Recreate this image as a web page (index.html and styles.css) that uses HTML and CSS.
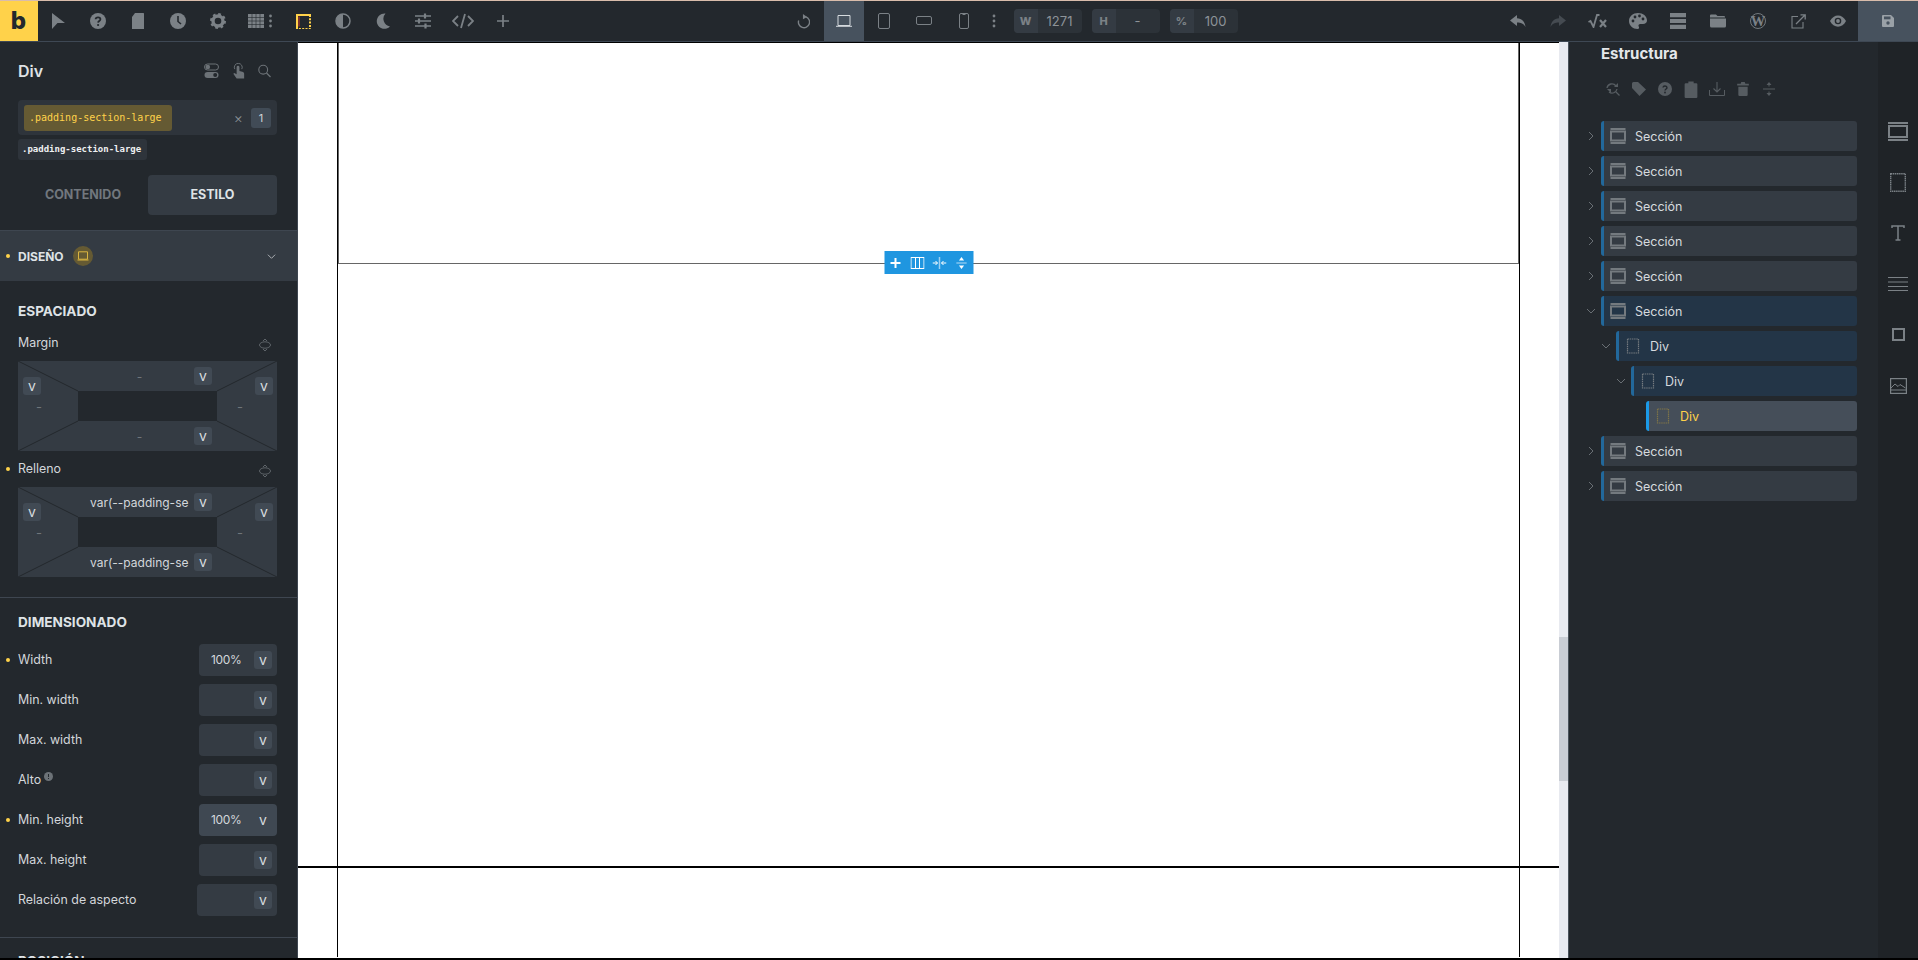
FILE: index.html
```html
<!DOCTYPE html>
<html lang="es">
<head>
<meta charset="utf-8">
<title>Estructura</title>
<link rel="stylesheet" href="styles.css">
</head>
<body>
<svg class="defs" aria-hidden="true">
  <symbol id="i-section" viewBox="0 0 16 16"><path d="M.5 1h15M.5 15h15" stroke="currentColor" stroke-width="1.800" fill="none"/><rect x="1" y="3.500" width="14" height="9" fill="none" stroke="currentColor" stroke-width="2"/></symbol>
  <symbol id="i-div" viewBox="0 0 16 16"><rect x="2.500" y="1" width="11" height="14" fill="none" stroke="currentColor" stroke-width="1.200" stroke-dasharray="1.500 .7"/></symbol>
  <symbol id="i-chev-r" viewBox="0 0 10 10"><path d="M3 1l4 4-4 4" fill="none" stroke="currentColor"/></symbol>
  <symbol id="i-chev-d" viewBox="0 0 10 10"><path d="M1 3l4 4 4-4" fill="none" stroke="currentColor"/></symbol>
  <symbol id="i-link" viewBox="0 0 14 14"><ellipse cx="7" cy="7" rx="5.500" ry="3.200" fill="none" stroke="currentColor"/><path d="M5 3l2-2 2 2M5 11l2 2 2-2" fill="none" stroke="currentColor"/></symbol>
</svg>

<div class="app">
  <div class="top-edge"></div>
  <header class="toolbar">
    <div class="group">
      <div class="logo">b</div>
      <span class="tool"><svg viewBox="0 0 16 16" class="ic16"><path d="M2 0l13 10H7.500L2 16z" fill="currentColor"/></svg></span>
      <span class="tool"><svg viewBox="0 0 16 16" class="ic16"><circle cx="8" cy="8" r="8" fill="currentColor"/><path d="M5.600 6.200C5.800 3.800 10.400 3.800 10.400 6.300 10.400 8 8.200 8 8.100 9.600" fill="none" stroke="#23282d" stroke-width="1.800"/><circle cx="8.100" cy="12" r="1.100" fill="#23282d"/></svg></span>
      <span class="tool"><svg viewBox="0 0 16 16" class="ic16"><path d="M6 0h8.500a.5.5 0 0 1 .5.500V16H3V4z" fill="currentColor" transform="translate(-1)"/></svg></span>
      <span class="tool"><svg viewBox="0 0 16 16" class="ic16"><circle cx="8" cy="8" r="8" fill="currentColor"/><path d="M8 3v5.500l3 2.500" fill="none" stroke="#23282d" stroke-width="1.600"/></svg></span>
      <span class="tool"><svg viewBox="0 0 16 16" class="ic16"><circle cx="8" cy="8" r="5" fill="none" stroke="currentColor" stroke-width="3.400"/><circle cx="8" cy="8" r="7" fill="none" stroke="currentColor" stroke-width="2" stroke-dasharray="2.750 2.750"/></svg></span>
      <span class="tool"><svg viewBox="0 0 24 16" class="ic-grid"><rect x="0" y="1" width="16" height="14" fill="currentColor"/><path d="M0 4.500h16M0 8h16M0 11.500h16M4 1v14M8 1v14M12 1v14" stroke="#23282d" stroke-width=".6"/><circle cx="22.500" cy="3" r="1.400" fill="currentColor"/><circle cx="22.500" cy="8" r="1.400" fill="currentColor"/><circle cx="22.500" cy="13" r="1.400" fill="currentColor"/></svg></span>
      <span class="tool tool-gap"><svg viewBox="0 0 15 15" class="ic-frame"><path d="M3 2.500v10" stroke="#b5392f" stroke-width="1.200"/><path d="M1 15V1h14" fill="none" stroke="#ffd24a" stroke-width="2"/><path d="M14 1v14H1" fill="none" stroke="#ffd24a" stroke-width="2" stroke-dasharray="2 1.300"/></svg></span>
      <span class="tool"><svg viewBox="0 0 16 16" class="ic16"><circle cx="8" cy="8" r="7" fill="none" stroke="currentColor" stroke-width="1.500"/><path d="M8 1a7 7 0 0 0 0 14z" fill="currentColor"/></svg></span>
      <span class="tool"><svg viewBox="0 0 16 16" class="ic16"><path d="M10.500 .5a7.700 7.700 0 1 0 4.500 13A7.800 7.800 0 0 1 10.500 .5z" fill="currentColor"/></svg></span>
      <span class="tool"><svg viewBox="0 0 16 16" class="ic16"><path d="M0 3h16M0 8h16M0 13h16" stroke="currentColor" stroke-width="1.300"/><path d="M10 .5v5M4 5.500v5M10.500 10.500v5" stroke="currentColor" stroke-width="2.200"/></svg></span>
      <span class="tool"><svg viewBox="0 0 22 16" class="ic-code"><path d="M6 3L1 8l5 5M16 3l5 5-5 5M13 1L9 15" fill="none" stroke="currentColor" stroke-width="1.800"/></svg></span>
      <span class="tool"><svg viewBox="0 0 12 12" class="ic12"><path d="M6 0v12M0 6h12" stroke="currentColor" stroke-width="1.700"/></svg></span>
    </div>

    <div class="group">
      <span class="tool"><svg viewBox="0 0 12 14" class="ic-refresh"><path d="M8.300 2.700A5.200 5.200 0 1 1 1.500 6" fill="none" stroke="currentColor" stroke-width="1.300"/><path d="M5.500 0l3.800 2.800L5.500 5z" fill="currentColor"/></svg></span>
      <span class="tool tool-active"><svg viewBox="0 0 16 12" class="ic-dev"><path d="M2 .5h12v10H2zM0 11.300h16" fill="none" stroke="currentColor"/></svg></span>
      <span class="tool"><svg viewBox="0 0 12 16" class="ic-dev-v"><rect x=".5" y=".5" width="11" height="15" rx="1.500" fill="none" stroke="currentColor"/></svg></span>
      <span class="tool"><svg viewBox="0 0 16 10" class="ic-dev-h"><rect x=".5" y=".5" width="15" height="8" rx="1.500" fill="none" stroke="currentColor"/></svg></span>
      <span class="tool"><svg viewBox="0 0 10 16" class="ic-dev-p"><rect x=".5" y=".5" width="9" height="15" rx="1.500" fill="none" stroke="currentColor"/><path d="M3.500 1.500h3" stroke="currentColor"/></svg></span>
      <span class="tool tool-narrow"><svg viewBox="0 0 4 14" class="ic-dots"><circle cx="2" cy="2" r="1.400" fill="currentColor"/><circle cx="2" cy="7" r="1.400" fill="currentColor"/><circle cx="2" cy="12" r="1.400" fill="currentColor"/></svg></span>
      <div class="dims">
        <div class="dim"><b>W</b><span>1271</span></div>
        <div class="dim"><b>H</b><span>-</span></div>
        <div class="dim"><b>%</b><span>100</span></div>
      </div>
    </div>

    <div class="group">
      <span class="tool"><svg viewBox="0 0 16 14" class="ic16"><path d="M7 1L0 6.500 7 12V8.500c4 0 6.500 1 8.500 4.500C15 8 12 4.500 7 4.300z" fill="currentColor"/></svg></span>
      <span class="tool tool-dim"><svg viewBox="0 0 16 14" class="ic16"><path d="M9 1l7 5.500L9 12V8.500c-4 0-6.500 1-8.500 4.500C1 8 4 4.500 9 4.300z" fill="currentColor"/></svg></span>
      <span class="tool"><svg viewBox="0 0 20 14" class="ic-sqrt"><path d="M.5 8l2-1 3 6L9 1h2.500" fill="none" stroke="currentColor" stroke-width="1.800"/><path d="M12 6l6 7M18 6l-6 7" stroke="currentColor" stroke-width="2.200"/></svg></span>
      <span class="tool"><svg viewBox="0 0 18 16" class="ic-pal"><path d="M9 0C4 0 0 3.500 0 8s4 8 8.500 8c1.800 0 1.800-1.500 1.200-2.500-.7-1.200.2-2.500 1.600-2.500H14c2.300 0 4-1.300 4-3.500C18 3 14 0 9 0z" fill="currentColor"/><circle cx="4" cy="8" r="1.400" fill="#23282d"/><circle cx="6" cy="4" r="1.400" fill="#23282d"/><circle cx="10.500" cy="3" r="1.400" fill="#23282d"/><circle cx="14" cy="6" r="1.400" fill="#23282d"/></svg></span>
      <span class="tool"><svg viewBox="0 0 16 16" class="ic16"><path d="M0 0h16v4.200H0zM0 5.900h16v4.200H0zM0 11.800h16V16H0z" fill="currentColor"/></svg></span>
      <span class="tool"><svg viewBox="0 0 16 13" class="ic16"><path d="M1 0h5l1.500 1.500H14A1 1 0 0 1 15 2.500V3H0V1a1 1 0 0 1 1-1zM0 4h16v7.500a1.500 1.500 0 0 1-1.500 1.500h-13A1.500 1.500 0 0 1 0 11.500z" fill="currentColor"/></svg></span>
      <span class="tool"><svg viewBox="0 0 16 16" class="ic-wp"><circle cx="8" cy="8" r="7.500" fill="none" stroke="currentColor" stroke-width=".9"/><text x="8" y="13" class="wp-letter">W</text></svg></span>
      <span class="tool"><svg viewBox="0 0 15 15" class="ic-ext"><path d="M7 2.500H1v11.500h11V8" fill="none" stroke="currentColor" stroke-width="1.100"/><path d="M5 10L14 1M9.500 .8h4.700v4.700" fill="none" stroke="currentColor" stroke-width="1.300"/></svg></span>
      <span class="tool"><svg viewBox="0 0 16 12" class="ic16"><path d="M0 6c3.500-7.500 12.500-7.500 16 0-3.500 7.500-12.500 7.500-16 0z" fill="currentColor"/><circle cx="8" cy="6" r="3.300" fill="#23282d"/><circle cx="8" cy="6" r="1.900" fill="currentColor"/></svg></span>
      <span class="save"><svg viewBox="0 0 12 12" class="ic12"><path d="M1 0h8l3 3v8a1 1 0 0 1-1 1H1a1 1 0 0 1-1-1V1a1 1 0 0 1 1-1z" fill="currentColor"/><rect x="2" y="1.500" width="6.500" height="2.800" fill="#47525e"/><circle cx="6" cy="8" r="1.700" fill="#47525e"/></svg></span>
    </div>
  </header>

  <main class="workspace">
    <aside class="inspector">
      <div class="insp-head">
        <span class="insp-title">Div</span>
        <div class="insp-actions">
          <svg viewBox="0 0 15 16" class="act"><rect x=".5" y="1" width="14" height="6" rx="3" fill="none" stroke="currentColor"/><circle cx="3.800" cy="4" r="2.300" fill="currentColor"/><rect x=".5" y="9" width="14" height="6" rx="3" fill="currentColor"/><circle cx="11.200" cy="12" r="2" fill="#23282d"/></svg>
          <svg viewBox="0 0 13 17" class="act act-s"><path d="M2.500 6.500a4.200 4.200 0 1 1 7.500 0" fill="none" stroke="currentColor"/><path d="M4.500 4.500a1.500 1.500 0 0 1 3 0v4l3 .8c1.200.3 2 1 2 2.200V16.500H4.500L1 11.500l1-1 2.500 1.500z" fill="currentColor"/></svg>
          <svg viewBox="0 0 13 13" class="act act-s"><circle cx="5.200" cy="5.200" r="4.400" fill="none" stroke="currentColor" stroke-width="1.100"/><path d="M8.500 8.500l4 4" stroke="currentColor" stroke-width="1.300"/></svg>
        </div>
      </div>

      <div class="class-box">
        <span class="class-chip">.padding-section-large</span>
        <span class="class-x">×</span>
        <span class="class-count">1</span>
      </div>
      <div class="class-tag">.padding-section-large</div>

      <div class="tabs">
        <div class="tab">CONTENIDO</div>
        <div class="tab tab-on">ESTILO</div>
      </div>

      <div class="panel-bar">
        <span class="dot"></span>
        <span class="bar-label">DISEÑO</span>
        <span class="bar-badge"><svg viewBox="0 0 12 10"><path d="M1.500 .8h9v7.400h-9zM.5 9h11" fill="none" stroke="currentColor"/></svg></span>
        <svg viewBox="0 0 10 10" class="bar-chev"><use href="#i-chev-d"/></svg>
      </div>

      <h3 class="group-title first">ESPACIADO</h3>
      <div class="label-row lr-first"><span>Margin</span><svg class="link"><use href="#i-link"/></svg></div>
      <div class="box">
        <svg class="box-lines" viewBox="0 0 259 90"><path d="M0 0l60 30M259 0l-60 30M0 90l60-30M259 90l-60-30" stroke="#23282d"/></svg>
        <div class="side side-l"><span class="unit">v</span><span class="dash">-</span></div>
        <div class="edge edge-t"><span class="val val-c">-</span><span class="unit">v</span></div>
        <div class="hole"></div>
        <div class="edge edge-b"><span class="val val-c">-</span><span class="unit">v</span></div>
        <div class="side side-r"><span class="unit">v</span><span class="dash">-</span></div>
      </div>

      <div class="label-row"><span class="dot dot-abs"></span><span>Relleno</span><svg class="link"><use href="#i-link"/></svg></div>
      <div class="box">
        <svg class="box-lines" viewBox="0 0 259 90"><path d="M0 0l60 30M259 0l-60 30M0 90l60-30M259 90l-60-30" stroke="#23282d"/></svg>
        <div class="side side-l"><span class="unit">v</span><span class="dash">-</span></div>
        <div class="edge edge-t"><span class="val">var(--padding-se</span><span class="unit">v</span></div>
        <div class="hole"></div>
        <div class="edge edge-b"><span class="val">var(--padding-se</span><span class="unit">v</span></div>
        <div class="side side-r"><span class="unit">v</span><span class="dash">-</span></div>
      </div>

      <hr class="rule rule-a">
      <h3 class="group-title second">DIMENSIONADO</h3>
      <div class="dim-rows">
        <div class="field"><span class="dot dot-abs"></span><label>Width</label><div class="input"><span class="input-val">100%</span><span class="unit">v</span></div></div>
        <div class="field"><label>Min. width</label><div class="input"><span class="input-val"></span><span class="unit">v</span></div></div>
        <div class="field"><label>Max. width</label><div class="input"><span class="input-val"></span><span class="unit">v</span></div></div>
        <div class="field"><label>Alto<svg viewBox="0 0 9 9" class="info"><circle cx="4.500" cy="4.500" r="4.500" fill="currentColor"/><path d="M4.500 2v3M4.500 6v1" stroke="#23282d"/></svg></label><div class="input"><span class="input-val"></span><span class="unit">v</span></div></div>
        <div class="field"><span class="dot dot-abs"></span><label>Min. height</label><div class="input input-hover"><span class="input-val">100%</span><span class="unit unit-bare">v</span></div></div>
        <div class="field"><label>Max. height</label><div class="input"><span class="input-val"></span><span class="unit">v</span></div></div>
        <div class="field"><label>Relación de aspecto</label><div class="input input-wide"><span class="input-val"></span><span class="unit">v</span></div></div>
      </div>
      <hr class="rule rule-b">
      <h3 class="group-title third">POSICIÓN</h3>
    </aside>

    <section class="canvas">
      <div class="frame">
        <div class="selected">
          <div class="handle">
            <svg viewBox="0 0 12 12" class="h-ic"><path d="M6 1v10M1 6h10" stroke="currentColor" stroke-width="2"/></svg>
            <svg viewBox="0 0 14 12" class="h-ic"><rect x=".5" y=".5" width="13" height="11" fill="none" stroke="currentColor"/><path d="M5 .5v11M9 .5v11" stroke="currentColor"/></svg>
            <svg viewBox="0 0 14 12" class="h-ic"><path d="M7 0v12" stroke="#9ed0f2" stroke-width="1.500"/><path d="M0 6h5M3 4l2 2-2 2M14 6H9M11 4L9 6l2 2" fill="none" stroke="currentColor"/></svg>
            <svg viewBox="0 0 12 14" class="h-ic"><path d="M0 7h12" stroke="#cfe8fa"/><path d="M6 0L3 4h6zM6 14L3 10h6z" fill="currentColor"/></svg>
          </div>
        </div>
        <div class="section-end"></div>
      </div>
    </section>

    <div class="scrollbar"><div class="thumb"></div></div>

    <aside class="structure">
      <div class="tree-col">
        <h2 class="tree-title">Estructura</h2>
        <div class="tree-actions">
          <svg viewBox="0 0 14 14" class="ta"><path d="M1 6a5 5 0 0 1 9-2M11 7a5 5 0 0 1-8 3" fill="none" stroke="currentColor" stroke-width="1.300"/><path d="M8 5h4V1zM1 7h4v4z" fill="currentColor"/><path d="M10 10l3.500 3.500" stroke="currentColor" stroke-width="1.300"/></svg>
          <svg viewBox="0 0 14 14" class="ta"><path d="M0 1.500A1.500 1.500 0 0 1 1.500 0H6l8 7.500L7.500 14 0 6z" fill="currentColor"/></svg>
          <svg viewBox="0 0 14 14" class="ta"><circle cx="7" cy="7" r="7" fill="currentColor"/><path d="M5 5.500c.2-2 4-2 4 .2C9 7 7.100 7 7 8.500" fill="none" stroke="#23282d" stroke-width="1.400"/><circle cx="7" cy="10.500" r=".9" fill="#23282d"/></svg>
          <svg viewBox="0 0 12 16" class="ta ta-tall"><path d="M1 2h2.500V.5h5V2H11a1 1 0 0 1 1 1v12a1 1 0 0 1-1 1H1a1 1 0 0 1-1-1V3a1 1 0 0 1 1-1z" fill="currentColor"/></svg>
          <svg viewBox="0 0 16 14" class="ta ta-wide"><path d="M.5 8v5.500h15V8" fill="none" stroke="currentColor"/><path d="M8 0v9.500M4.500 6.500L8 10l3.500-3.500" fill="none" stroke="currentColor" stroke-width="1.100"/></svg>
          <svg viewBox="0 0 10 12" class="ta"><path d="M0 1.500h3L3.500 0h3L7 1.500h3V3H0zM1 4h8v7a1 1 0 0 1-1 1H2a1 1 0 0 1-1-1z" fill="currentColor"/></svg>
          <svg viewBox="0 0 12 14" class="ta"><path d="M0 7h12" stroke="currentColor"/><path d="M6 0L3.500 3h5zM6 14l-2.500-3h5z" fill="currentColor"/><path d="M6 2v2.500M6 9.500V12" stroke="currentColor"/></svg>
        </div>
        <div class="tree">
          <div class="node"><svg class="chev"><use href="#i-chev-r"/></svg><div class="row"><svg class="row-ic"><use href="#i-section"/></svg><span>Sección</span></div></div>
          <div class="node"><svg class="chev"><use href="#i-chev-r"/></svg><div class="row"><svg class="row-ic"><use href="#i-section"/></svg><span>Sección</span></div></div>
          <div class="node"><svg class="chev"><use href="#i-chev-r"/></svg><div class="row"><svg class="row-ic"><use href="#i-section"/></svg><span>Sección</span></div></div>
          <div class="node"><svg class="chev"><use href="#i-chev-r"/></svg><div class="row"><svg class="row-ic"><use href="#i-section"/></svg><span>Sección</span></div></div>
          <div class="node"><svg class="chev"><use href="#i-chev-r"/></svg><div class="row"><svg class="row-ic"><use href="#i-section"/></svg><span>Sección</span></div></div>
          <div class="node"><svg class="chev"><use href="#i-chev-d"/></svg><div class="row row-open"><svg class="row-ic"><use href="#i-section"/></svg><span>Sección</span></div></div>
          <div class="node lvl1"><svg class="chev"><use href="#i-chev-d"/></svg><div class="row row-open"><svg class="row-ic"><use href="#i-div"/></svg><span>Div</span></div></div>
          <div class="node lvl2"><svg class="chev"><use href="#i-chev-d"/></svg><div class="row row-open"><svg class="row-ic"><use href="#i-div"/></svg><span>Div</span></div></div>
          <div class="node lvl3"><span class="chev"></span><div class="row row-current"><svg class="row-ic"><use href="#i-div"/></svg><span>Div</span></div></div>
          <div class="node"><svg class="chev"><use href="#i-chev-r"/></svg><div class="row"><svg class="row-ic"><use href="#i-section"/></svg><span>Sección</span></div></div>
          <div class="node"><svg class="chev"><use href="#i-chev-r"/></svg><div class="row"><svg class="row-ic"><use href="#i-section"/></svg><span>Sección</span></div></div>
        </div>
      </div>
      <div class="strip">
        <svg viewBox="0 0 20 19" class="st"><path d="M0 1h20M0 18h20" stroke="currentColor" stroke-width="1.800"/><rect x="1" y="4" width="18" height="11" fill="none" stroke="currentColor" stroke-width="2"/></svg>
        <svg viewBox="0 0 16 19" class="st st-div"><rect x=".7" y=".7" width="14.600" height="17.600" fill="none" stroke="currentColor" stroke-width="1.400" stroke-dasharray="1.500 .6"/></svg>
        <svg viewBox="0 0 14 16" class="st st-t"><path d="M1 3V1h12v2M7 1v14M4.500 15h5" fill="none" stroke="currentColor" stroke-width="1.500"/></svg>
        <svg viewBox="0 0 20 14" class="st st-lines"><path d="M0 .5h20M0 5h20M0 9.500h20M0 13.500h20" stroke="currentColor"/></svg>
        <svg viewBox="0 0 13 13" class="st st-box"><rect x="1" y="1" width="11" height="11" fill="none" stroke="currentColor" stroke-width="2"/></svg>
        <svg viewBox="0 0 17 16" class="st st-img"><rect x=".6" y=".6" width="15.800" height="14.800" fill="none" stroke="currentColor" stroke-width="1.200"/><path d="M1 10l4-4 3 2.500 2-2 5.500 3.500M1 12h15" fill="none" stroke="currentColor"/></svg>
      </div>
    </aside>
  </main>
  <div class="bottom-edge"></div>
</div>
</body>
</html>
```
FILE: styles.css
```css
* { box-sizing: border-box; }
html, body { margin: 0; height: 100%; overflow: hidden; }
body { background: #23282d; font-family: Inter, "Liberation Sans", sans-serif; color: #e4e7ea; font-size: 13px; }
.defs { display: none; }
.app { height: 960px; width: 1918px; display: flex; flex-direction: column; }
.top-edge { height: 1px; background: #d9bcab; flex: none; }
.bottom-edge { height: 2px; background: #000; flex: none; }

/* toolbar */
.toolbar { height: 41px; flex: none; display: flex; justify-content: space-between; background: #23282d; border-bottom: 1px solid #3e4854; color: #7b8186; }
.group { display: flex; align-items: stretch; }
.logo { width: 38px; background: #ffd24a; color: #23282d; font: 800 24px/40px Inter, sans-serif; text-align: center; padding-right: 1px; }
.tool { width: 40px; display: flex; align-items: center; justify-content: center; }
.tool-gap { margin-left: 5px; }
.tool-narrow { width: 20px; }
.tool-active { background: #47525e; color: #d5dade; }
.tool-dim { color: #454b51; }
.ic16 { width: 16px; height: 16px; }
.ic12 { width: 12px; height: 12px; }
.ic-frame { width: 15px; height: 15px; }
.ic-refresh { width: 13px; height: 15px; }
.ic-grid { width: 24px; height: 16px; margin-left: 4px; }
.ic-code { width: 22px; height: 16px; }
.ic-dev { width: 16px; height: 12px; }
.ic-dev-v { width: 12px; height: 16px; }
.ic-dev-h { width: 16px; height: 10px; }
.ic-dev-p { width: 10px; height: 16px; }
.ic-dots { width: 4px; height: 14px; }
.ic-sqrt { width: 20px; height: 14px; }
.ic-pal { width: 18px; height: 16px; }
.ic-wp { width: 16px; height: 16px; }
.ic-ext { width: 15px; height: 15px; }
.wp-letter { font: 700 14.500px "Liberation Serif", serif; fill: currentColor; text-anchor: middle; }
.save { width: 60px; background: #47525e; color: #9aa1a7; display: flex; align-items: center; justify-content: center; }
.dims { display: flex; gap: 10px; align-items: center; margin-left: 10px; }
.dim { display: flex; width: 68px; height: 24px; border-radius: 4px; background: #2c3238; overflow: hidden; font-size: 13px; color: #8d9398; }
.dim b { width: 24px; background: #343b43; color: #7b8186; font-size: 11px; line-height: 24px; text-align: center; font-weight: 800; }
.dim span { flex: 1; text-align: center; line-height: 24px; }

/* layout */
.workspace { flex: 1; min-height: 0; display: flex; }

/* inspector */
.inspector { width: 298px; flex: none; background: #23282d; border-right: 1px solid #3e4650; overflow: hidden; position: relative; }
.insp-head { height: 58px; padding: 0 26px 0 18px; display: flex; align-items: center; justify-content: space-between; }
.insp-title { font-size: 16px; font-weight: 600; color: #dfe2e5; }
.insp-actions { display: flex; align-items: center; gap: 13px; color: #6c7277; }
.act { width: 15px; height: 16px; }
.act-s { width: 13px; height: 16px; }
.class-box { margin: 0 20px 0 18px; height: 35px; background: #2e343b; border-radius: 4px; display: flex; align-items: center; padding: 0 6px; }
.class-chip { height: 26px; width: 148px; background: #655a33; border-radius: 3px; color: #ffd24a; font: 10px/26px "DejaVu Sans Mono", monospace; padding-left: 5px; }
.class-x { margin-left: auto; color: #8a9096; font-size: 14px; font-weight: 300; }
.class-count { margin-left: 8px; width: 20px; height: 20px; background: #414b56; border-radius: 3px; text-align: center; line-height: 20px; font-size: 11px; color: #cfd3d7; }
.class-tag { margin: 4px 0 0 18px; width: 129px; height: 21px; background: #2e343b; border-radius: 3px; color: #eef0f2; font: 700 9px/21px "DejaVu Sans Mono", monospace; padding-left: 4px; white-space: nowrap; }
.tabs { margin: 15px 20px 0 18px; display: grid; grid-template-columns: 130px 129px; height: 40px; }
.tab { display: flex; align-items: center; justify-content: center; padding-bottom: 2px; font-size: 12.500px; font-weight: 700; color: #71777d; }
.tab-on { background: #343b43; border-radius: 4px; color: #dfe3e6; }
.panel-bar { margin-top: 15px; height: 51px; border-top: 1px solid #3e4650; background: #343b43; display: flex; align-items: center; padding-left: 18px; position: relative; }
.dot { width: 4px; height: 4px; border-radius: 50%; background: #ffd24a; position: absolute; left: 6px; top: 50%; margin-top: -2px; }
.bar-label { font-size: 12px; font-weight: 700; color: #dfe3e6; }
.bar-badge { margin-left: 9px; width: 20px; height: 20px; border-radius: 50%; background: #655a33; color: #d9b441; display: flex; align-items: center; justify-content: center; }
.bar-badge svg { width: 12px; height: 10px; }
.bar-chev { margin-left: auto; margin-right: 21px; width: 9px; height: 9px; color: #b8bcc0; }
.group-title { margin: 0; height: 20px; line-height: 20px; padding-left: 18px; font-size: 13.600px; font-weight: 700; color: #dfe3e6; }
.group-title.first { margin-top: 20px; }
.group-title.second { margin-top: 14px; }
.group-title.third { margin-top: 13px; }
.label-row { position: relative; margin-top: 8px; height: 20px; padding: 0 25px 2px 18px; display: flex; align-items: center; justify-content: space-between; color: #d3d7db; font-size: 12.400px; }
.label-row.lr-first { margin-top: 12px; }
.link { width: 14px; height: 14px; color: #5e6469; margin-top: 5px; }
.box { position: relative; margin: 8px 0 0 18px; width: 259px; height: 90px; background: #343b43; display: grid; grid-template-columns: 60px 139px 60px; grid-template-rows: 30px 30px 30px; }
.box-lines { position: absolute; inset: 0; width: 259px; height: 90px; }
.hole { grid-column: 2; grid-row: 2; background: #23282d; position: relative; }
.side { grid-row: 1 / 4; display: flex; flex-direction: column; position: relative; padding-top: 16px; }
.side-l { grid-column: 1; padding-left: 5px; }
.side-r { grid-column: 3; padding-left: 38px; }
.side .dash { margin-top: 6px; line-height: 12px; color: #6f757a; }
.side-l .dash { margin-left: 13px; }
.side-r .dash { margin-left: -18px; }
.edge { grid-column: 2; display: flex; align-items: center; padding-left: 12px; gap: 5px; position: relative; }
.edge-t { grid-row: 1; }
.edge-b { grid-row: 3; }
.val { width: 99px; white-space: nowrap; color: #d3d7db; font-size: 12px; }
.val-c { text-align: center; color: #6f757a; }
.unit { width: 18px; height: 18px; flex: none; border-radius: 3px; background: #414a54; color: #d6dade; font-size: 14px; line-height: 18px; text-align: center; display: block; }
.unit-bare { background: transparent; }
.rule { border: 0; border-top: 1px solid #3e4650; margin: 0; }
.rule-a { margin-top: 20px; }
.rule-b { margin-top: 21px; }
.dim-rows { margin-top: 12px; display: flex; flex-direction: column; gap: 8px; padding: 0 20px 0 18px; }
.field { position: relative; height: 32px; display: flex; align-items: center; justify-content: space-between; color: #d3d7db; font-size: 12.400px; }
.field label { display: flex; align-items: flex-start; line-height: 16px; padding-bottom: 1px; }
.field .dot-abs { left: -12px; }
.info { width: 9px; height: 9px; color: #6c7277; margin-left: 3px; }
.input { width: 78px; height: 32px; background: #343b43; border-radius: 4px; display: flex; align-items: center; padding-right: 5px; }
.input-wide { width: 80px; }
.input-hover { background: #3f4852; }
.input-val { flex: 1; padding-left: 12px; padding-bottom: 1px; font-size: 12px; letter-spacing: -.3px; }

/* canvas */
.canvas { width: 1261px; flex: none; background: #fff; border-top: 1px solid #000; overflow: hidden; }
.frame { margin: 0 39px; height: 100%; border: solid #000; border-width: 0 1px; }
.selected { position: relative; margin-top: -1px; height: 222px; border: 1px solid #666; }
.handle { position: absolute; left: 50%; bottom: -11px; transform: translateX(-50%); width: 89px; height: 23px; background: #1f96e0; color: #fff; display: grid; grid-template-columns: repeat(4, 22px); justify-items: center; align-items: center; }
.h-ic { width: 14px; height: 12px; }
.section-end { margin: 602px -40px 0; height: 2px; background: #000; }
.scrollbar { width: 9px; flex: none; background: #e8eaf0; }
.thumb { margin-top: 595px; height: 144px; background: #c9cdd4; }

/* structure */
.structure { flex: 1; display: flex; background: #23282d; border-left: 1px solid #4a525b; }
.tree-col { width: 309px; padding-left: 32px; }
.tree-title { margin: 0; height: 24px; line-height: 24px; font-size: 15px; font-weight: 700; color: #e4e7ea; }
.tree-actions { margin: 12px 0 0 -1px; height: 22px; display: grid; grid-template-columns: repeat(7, 26px); justify-items: center; align-items: center; color: #565c61; }
.ta { width: 14px; height: 14px; }
.ta-tall { width: 14px; height: 17px; }
.ta-wide { width: 16px; }
.tree { margin: 21px 21px 0 -20px; display: flex; flex-direction: column; gap: 5px; }
.node { display: flex; align-items: center; height: 30px; }
.lvl1 { margin-left: 15px; }
.lvl2 { margin-left: 30px; }
.lvl3 { margin-left: 45px; }
.chev { width: 10px; height: 10px; margin: 0 5px; flex: none; color: #696f74; }
.row { flex: 1; height: 30px; display: flex; align-items: center; gap: 9px; padding-left: 6px; background: #343b43; border-left: 3px solid #22689b; border-radius: 3px; color: #d6dade; font-size: 12.500px; }
.row-ic { width: 16px; height: 16px; color: #747a7f; }
.row-open { background: #233547; }
.row-current { background: #454e59; border-left-color: #1b9ae8; color: #ffd24a; }
.row-current .row-ic { color: #7f7448; }
.strip { width: 40px; background: #1f2327; display: flex; flex-direction: column; align-items: center; color: #7b8186; padding-top: 80px; }
.st { width: 20px; height: 19px; flex: none; }
.st-div { width: 16px; margin-top: 32px; }
.st-t { width: 14px; height: 16px; margin-top: 33px; }
.st-lines { height: 14px; margin-top: 36px; }
.st-box { width: 13px; height: 13px; margin-top: 37px; }
.st-img { width: 17px; height: 16px; margin-top: 37px; }
```
